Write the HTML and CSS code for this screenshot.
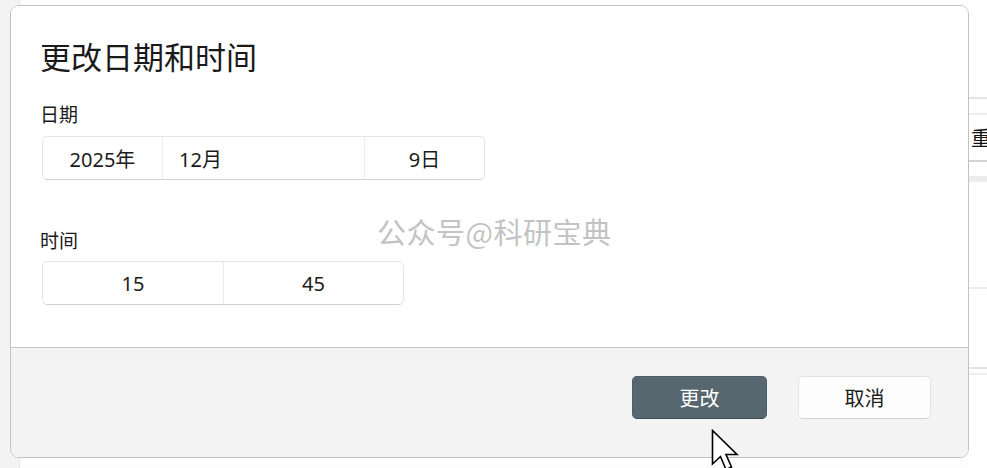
FILE: index.html
```html
<!DOCTYPE html>
<html lang="zh-CN">
<head>
<meta charset="utf-8">
<title>更改日期和时间</title>
<link rel="stylesheet" href="styles.css">
</head>
<body>
<div class="backdrop">
  <div class="sidebar"></div>
  <div class="main">
    <div class="rightcol">
      <div class="gap g97"></div>
      <div class="line l1"></div>
      <div class="gap g14"></div>
      <div class="line l2"></div>
      <div class="rowtext">重</div>
      <div class="line l3"></div>
      <div class="gap g14"></div>
      <div class="band"></div>
      <div class="gap g105"></div>
      <div class="line l2"></div>
      <div class="gap g78"></div>
      <div class="line l1"></div>
      <div class="gap g4"></div>
      <div class="line l2"></div>
    </div>
  </div>
</div>

<div class="dialog">
  <div class="dialog-body">
    <h1 class="title">更改日期和时间</h1>
    <div class="label label-date">日期</div>
    <div class="picker picker-date">
      <div class="seg seg-year">2025年</div>
      <div class="seg seg-month">12月</div>
      <div class="seg seg-day">9日</div>
    </div>
    <div class="label label-time">时间</div>
    <div class="picker picker-time">
      <div class="seg seg-hour">15</div>
      <div class="seg seg-min">45</div>
    </div>
    <div class="watermark">公众号@科研宝典</div>
  </div>
  <div class="dialog-footer">
    <button class="btn btn-primary">更改</button>
    <button class="btn btn-secondary">取消</button>
  </div>
</div>

<svg class="cursor" width="30" height="46" viewBox="0 0 30 46">
  <path d="M1.5 1.5 L1.5 35 L9.5 27.5 L15 40.5 L20.5 38 L15 25.5 L26 25.5 Z" fill="#ffffff" stroke="#000000" stroke-width="1.6" stroke-linejoin="miter"/>
</svg>
</body>
</html>
```

FILE: styles.css
```css
* { box-sizing: border-box; }
html, body {
  margin: 0;
  padding: 0;
  width: 987px;
  height: 468px;
  overflow: hidden;
  background: #ffffff;
  font-family: "Noto Sans", "Noto Sans CJK SC", sans-serif;
  color: #1b1b1b;
}
.backdrop {
  display: flex;
  width: 987px;
  height: 468px;
}
.sidebar {
  width: 20px;
  height: 100%;
  background: #f3f3f3;
  border-right: 1px solid #e6e6e6;
}
.main {
  flex: 1;
  display: flex;
  justify-content: flex-end;
  background: #fdfdfd;
}
.rightcol {
  width: 19px;
  display: flex;
  flex-direction: column;
  background: #ffffff;
}
.gap { flex: none; }
.g97 { height: 97px; }
.g14 { height: 14px; }
.g4 { height: 4px; }
.g105 { height: 105px; }
.g78 { height: 78px; }
.line { height: 1px; flex: none; }
.l1 { background: #e3e3e3; height: 2px; }
.l2 { background: #ededed; height: 2px; }
.l3 { background: #d4d4d4; height: 2px; }
.band { height: 6px; background: #ececec; }
.rowtext {
  height: 45px;
  font-family: "Noto Sans CJK SC", sans-serif;
  font-size: 20px;
  line-height: 45px;
  padding-left: 3px;
  white-space: nowrap;
  overflow: hidden;
  color: #111;
}

.dialog {
  position: absolute;
  left: 10px;
  top: 5px;
  width: 959px;
  height: 453px;
  border: 1.5px solid #c2c2c2;
  border-radius: 9px;
  background: #ffffff;
  overflow: hidden;
  display: flex;
  flex-direction: column;
}
.dialog-body {
  position: relative;
  height: 342px;
  flex: none;
  padding: 30px 0 0 29px;
  background: #ffffff;
  border-bottom: 1.5px solid #c8c8c8;
}
.title {
  margin: 0;
  font-family: "Noto Sans CJK SC", sans-serif;
  font-weight: 400;
  font-size: 31px;
  line-height: 40px;
  color: #1a1a1a;
}
.label {
  font-family: "Noto Sans CJK SC", sans-serif;
  font-size: 19px;
  line-height: 28px;
  color: #1a1a1a;
}
.label-date { margin-top: 24px; }
.label-time { margin-top: 46px; }
.picker {
  margin-top: 8px;
  margin-left: 2px;
  display: flex;
  height: 44px;
  border: 1px solid #e6e6e6;
  border-bottom: 1.5px solid #d2d2d2;
  border-radius: 5px;
  background: #ffffff;
  font-family: "Noto Sans", "Noto Sans CJK SC", sans-serif;
  font-size: 20px;
  color: #1b1b1b;
}
.picker-date { width: 443px; }
.picker-time { width: 362px; margin-top: 7px; }
.seg {
  display: flex;
  align-items: center;
  justify-content: center;
  height: 100%;
  border-right: 1px solid #ececec;
}
.seg:last-child { border-right: none; }
.seg-year { width: 120px; }
.seg-month { width: 202px; justify-content: flex-start; padding-left: 16px; }
.seg-day { flex: 1; }
.seg-hour { width: 181px; }
.seg-min { flex: 1; }

.watermark {
  position: absolute;
  left: 366px;
  top: 205px;
  font-family: "Noto Sans CJK SC", sans-serif;
  font-size: 29px;
  line-height: 40px;
  color: #c3c3c3;
  letter-spacing: 0.5px;
  white-space: nowrap;
}

.dialog-footer {
  flex: 1;
  background: #f3f3f3;
  display: flex;
  justify-content: flex-end;
  align-items: flex-start;
  gap: 31px;
  padding: 28px 37px 0 0;
}
.btn {
  height: 43px;
  border-radius: 5px;
  font-family: "Noto Sans CJK SC", sans-serif;
  font-size: 20px;
  padding: 0;
  cursor: default;
}
.btn-primary {
  width: 135px;
  background: #56676f;
  border: 1px solid #4d5d65;
  border-bottom: 1.5px solid #3f4c53;
  color: #ffffff;
}
.btn-secondary {
  width: 133px;
  background: #fdfdfd;
  border: 1px solid #e4e4e4;
  border-bottom: 1.5px solid #d0d0d0;
  color: #1b1b1b;
}

.cursor {
  position: absolute;
  left: 711px;
  top: 429px;
}
```
